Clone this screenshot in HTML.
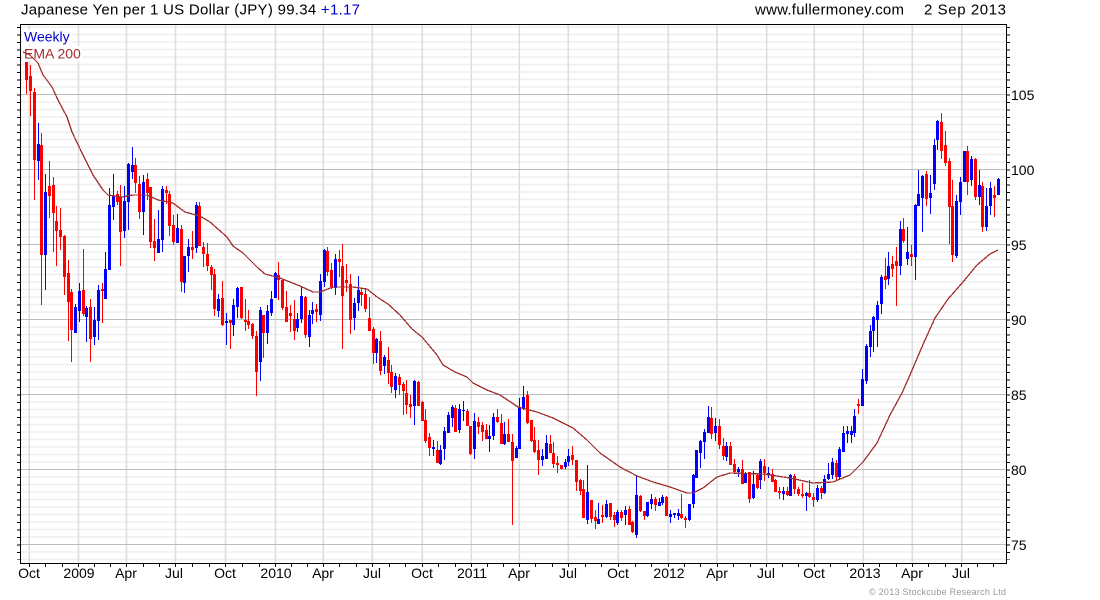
<!DOCTYPE html>
<html><head><meta charset="utf-8"><title>JPY</title>
<style>html,body{margin:0;padding:0;background:#fff}svg{display:block}text{font-family:"Liberation Sans",Arial,sans-serif;font-size:14px}</style></head>
<body>
<svg width="1100" height="600" viewBox="0 0 1100 600" xmlns="http://www.w3.org/2000/svg">
<rect width="1100" height="600" fill="#fff"/>
<path fill="none" stroke="#efefef" stroke-width="1.6" d="M21 27H1006M21 34.5H1006M21 42H1006M21 49.5H1006M21 57H1006M21 64.5H1006M21 72H1006M21 79.5H1006M21 87H1006M21 102H1006M21 109.5H1006M21 117H1006M21 124.5H1006M21 132H1006M21 139.5H1006M21 147H1006M21 154.5H1006M21 162H1006M21 177H1006M21 184.5H1006M21 192H1006M21 199.5H1006M21 207H1006M21 214.5H1006M21 222H1006M21 229.5H1006M21 237H1006M21 252H1006M21 259.5H1006M21 267H1006M21 274.5H1006M21 282H1006M21 289.5H1006M21 297H1006M21 304.5H1006M21 312H1006M21 327H1006M21 334.5H1006M21 342H1006M21 349.5H1006M21 357H1006M21 364.5H1006M21 372H1006M21 379.5H1006M21 387H1006M21 402H1006M21 409.5H1006M21 417H1006M21 424.5H1006M21 432H1006M21 439.5H1006M21 447H1006M21 454.5H1006M21 462H1006M21 477H1006M21 484.5H1006M21 492H1006M21 499.5H1006M21 507H1006M21 514.5H1006M21 522H1006M21 529.5H1006M21 537H1006M21 552H1006M21 559.5H1006"/>
<path fill="none" stroke="#dedede" stroke-width="1.6" d="M29.3 25V563M78.5 25V563M126.5 25V563M175.5 25V563M225.5 25V563M275.5 25V563M323.3 25V563M372.3 25V563M422.3 25V563M471.3 25V563M519.3 25V563M568.3 25V563M618.3 25V563M668.3 25V563M717 25V563M766.7 25V563M814.3 25V563M863.3 25V563M912.3 25V563M961.7 25V563"/>
<path fill="none" stroke="#bcbcbc" stroke-width="1" d="M21 94.5H1006M21 169.5H1006M21 244.5H1006M21 319.5H1006M21 394.5H1006M21 469.5H1006M21 544.5H1006"/>
<rect x="23" y="30" width="49" height="15" fill="#fff"/>
<rect x="23" y="46" width="59" height="15" fill="#fff"/>
<g transform="translate(.5 0)" fill="none">
<path stroke="#0000ff" stroke-width="1" d="M38 123V180M45 174V290M75 304V333M79 283V322M86 306V342M94 307V345M98 285V340M105 252V299M109 188V270M113 174V220M124 186V238M128 163V230M132 147V179M143 175V235M158 210V253M162 186V252M177 214V243M184 256V293M188 239V272M196 202V253M218 294V317M226 313V345M233 299V336M237 287V318M260 307V381M267 305V344M271 291V316M275 272V298M297 313V332M301 287V323M309 310V347M312 302V324M320 274V321M324 249V287M335 254V295M354 298V330M358 276V311M376 338V363M384 355V374M395 373V398M414 380V425M433 440V456M440 445V465M444 427V460M448 412V433M452 405V427M459 404V433M463 401V421M474 413V459M489 425V452M493 413V440M504 422V445M516 446V458M519 398V449M523 386V410M542 449V466M546 435V459M565 459V469M568 449V466M587 465V524M598 503V524M606 500V518M617 510V525M625 506V525M636 475V538M647 502V517M651 494V509M659 498V506M662 495V505M670 510V523M674 513V518M678 509V520M689 504V521M693 474V508M696 450V478M700 440V468M704 429V459M708 406V433M715 418V441M726 442V461M738 467V477M745 472V483M753 471V499M760 459V489M768 467V478M783 487V500M790 474V496M806 492V511M817 485V502M824 475V494M828 463V480M832 458V479M839 447V480M843 426V452M847 426V443M851 426V443M854 409V437M862 369V406M866 344V384M870 325V357M873 316V352M877 301V347M881 275V314M888 252V285M900 221V275M907 227V265M915 204V280M918 170V206M922 175V232M930 175V214M934 139V190M937 120V150M956 195V258M960 177V215M964 151V182M971 156V186M979 170V205M986 188V231M990 182V215M998 178V195"/>
<path stroke="#0000ff" stroke-width="3" d="M38 144V161M45 192V255M75 307V333M79 291V311M86 308V317M94 320V337M98 290V321M105 269V299M109 205V270M113 196V207M124 201V231M128 164V202M132 165V172M143 182V212M158 239V253M162 189V240M177 228V243M184 256V283M188 247V256M196 205V248M218 299V311M226 321V323M233 305V325M237 288V307M260 310V362M267 311V333M271 299V313M275 273V298M297 319V328M301 296V319M309 315V337M312 310V314M320 281V315M324 250V282M335 259V288M354 303V318M358 290V303M376 339V353M384 357V366M395 376V390M414 381V406M433 447V449M440 450V464M444 431V449M448 415V433M452 407V418M459 409V430M463 410V411M474 421V449M489 436V439M493 417V436M504 434V444M516 448V458M519 407V449M523 397V408M542 456V460M546 443V459M565 462V467M568 456V462M587 492V520M598 519V524M606 504V517M617 512V523M625 510V515M636 495V535M647 502V516M651 499V504M659 502V506M662 497V503M670 514V517M674 513V515M678 513V516M689 504V520M693 475V504M696 450V478M700 441V453M704 432V442M708 417V433M715 426V433M726 446V457M738 469V472M745 474V483M753 484V498M760 461V480M768 473V475M783 491V494M790 475V496M806 493V496M817 488V500M824 479V493M828 474V479M832 462V475M839 449V477M843 433V452M847 431V434M851 431V435M854 416V433M862 379V406M866 346V381M870 331V347M873 317V331M877 305V320M881 277V304M888 266V279M900 229V266M907 252V259M915 205V257M918 194V206M922 176V198M930 193V198M934 145V184M937 121V140M956 201V256M960 182V202M964 151V182M971 159V180M979 185V197M986 206V227M990 188V206M998 179V195"/>
<path stroke="#ff0000" stroke-width="1" d="M26 62V94M30 65V116M34 88V200M41 133V305M49 161V218M53 177V252M56 206V266M60 208V250M64 235V295M68 260V341M71 289V362M83 249V316M90 299V362M102 283V323M117 191V205M120 185V266M135 158V193M139 176V219M147 173V200M150 187V248M154 219V261M166 186V204M169 191V236M173 215V245M181 225V292M192 231V259M199 202V246M203 242V267M207 243V271M211 265V290M214 269V316M222 281V326M230 320V349M241 287V319M245 299V331M248 310V329M252 323V339M256 331V396M263 315V358M278 262V300M282 280V310M286 291V322M290 305V332M294 300V340M305 296V338M316 304V322M327 247V276M331 263V289M339 250V277M342 244V349M346 264V292M350 274V334M361 289V306M365 289V312M369 297V331M373 327V364M380 331V375M388 347V384M391 365V393M399 374V395M403 382V415M406 380V414M410 395V418M418 381V406M422 401V421M425 409V443M429 433V456M437 441V463M455 405V432M467 409V426M470 426V455M478 417V434M482 422V441M486 424V439M497 409V423M501 414V444M508 419V442M512 434V525M527 391V424M531 420V442M534 427V453M538 440V475M550 435V453M553 442V468M557 456V473M561 465V469M572 446V465M576 460V491M580 479V495M583 480V518M591 500V523M595 510V529M602 505V523M610 503V520M614 512V527M621 510V521M629 506V525M632 521V533M640 495V512M644 511V520M655 497V511M666 496V516M681 494V519M685 516V528M711 407V439M719 419V449M723 438V460M730 442V465M734 459V474M742 460V484M749 472V503M757 473V489M764 459V481M772 469V482M775 479V492M779 487V499M787 487V496M794 474V494M798 487V496M802 483V498M809 480V498M813 493V507M821 486V499M836 460V481M858 399V414M885 258V289M892 256V277M896 247V306M903 218V243M911 245V266M926 171V206M941 113V159M945 131V166M949 158V244M952 180V262M967 146V195M975 158V200M982 182V232M994 186V217"/>
<path stroke="#ff0000" stroke-width="3" d="M26 62V80M30 76V91M34 92V160M41 145V255M49 186V196M53 185V213M56 221V231M60 230V237M64 236V277M68 273V302M71 292V330M83 290V314M90 307V339M102 289V291M117 194V202M120 197V232M135 165V183M139 184V212M147 179V193M150 187V242M154 241V248M166 190V193M169 194V226M173 225V242M181 229V282M192 247V250M199 206V246M203 247V254M207 254V266M211 267V275M214 274V309M222 298V325M230 320V323M241 287V318M245 320V322M248 321V325M252 324V336M256 336V372M263 315V333M278 275V280M282 280V308M286 307V322M290 313V316M294 319V331M305 297V335M316 309V312M327 251V272M331 270V287M339 259V262M342 266V296M346 280V283M350 284V320M361 292V295M365 294V309M369 318V331M373 329V353M380 341V371M388 360V373M391 372V387M399 377V385M403 384V391M406 393V405M410 404V407M418 382V406M422 402V421M425 420V441M429 437V448M437 450V463M455 408V432M467 411V426M470 426V454M478 422V427M482 425V432M486 430V439M497 417V422M501 423V444M508 434V442M512 442V461M527 395V423M531 420V441M534 440V452M538 450V460M550 444V453M553 453V464M557 463V465M561 465V469M572 455V460M576 460V482M580 480V491M583 489V518M591 500V519M595 517V521M602 515V517M610 503V517M614 515V520M621 512V518M629 509V525M632 522V532M640 496V511M644 511V516M655 499V505M666 497V516M681 514V518M685 518V520M711 418V434M719 426V445M723 446V456M730 446V465M734 464V472M742 469V484M749 472V499M757 475V488M764 466V473M772 474V482M775 480V492M779 491V493M787 491V495M794 476V489M798 489V494M802 494V496M809 493V497M813 497V500M821 488V493M836 463V477M858 404V406M885 276V280M892 264V269M896 261V266M903 229V241M911 254V257M926 174V199M941 122V151M945 145V163M949 161V207M952 206V255M967 151V182M975 159V197M982 186V227M994 195V198"/>
</g>
<text x="24" y="41.500" fill="#0000cc">Weekly</text>
<text x="24" y="58.500" fill="#a52a2a">EMA 200</text>
<polyline fill="none" stroke="#a03030" stroke-width="1.3" shape-rendering="crispEdges" points="23,52 30,55 38,63 43,75 52,87 58,100 67,117 72,132 83,155 93,175 103,190 108,195 122,197 133,195 147,195 158,200 173,203 185,212 200,216 210,222 227,237 233,246 243,253 258,268 265,274 280,278 300,286 313,292 320,292 333,287 353,287 367,289 377,297 388,304 400,315 412,329 422,337 437,355 443,365 455,372 467,377 473,383 487,390 500,395 518,407 537,412 553,418 573,428 587,440 600,453 620,467 637,476 653,482 670,487 687,493 693,493 703,488 717,477 730,473 763,474 790,478 813,483 833,482 850,475 863,462 877,443 890,415 902,393 910,375 925,340 935,318 948,299 963,282 977,265 990,254 998,250"/>
<rect x="20.500" y="24.500" width="986" height="539" fill="none" stroke="#000" stroke-width="1"/>
<path fill="none" stroke="#000" stroke-width="3" stroke-dasharray="1 6.5" d="M18.500 27V560M1008.500 27V560"/>
<path fill="none" stroke="#000" stroke-width="1" d="M29.500 564v3M45.500 564v3M62.500 564v3M78.500 564v3M94.500 564v3M110.500 564v3M126.500 564v3M143.500 564v3M159.500 564v3M175.500 564v3M192.500 564v3M209.500 564v3M225.500 564v3M242.500 564v3M259.500 564v3M275.500 564v3M291.500 564v3M307.500 564v3M323.500 564v3M339.500 564v3M356.500 564v3M372.500 564v3M389.500 564v3M405.500 564v3M422.500 564v3M438.500 564v3M455.500 564v3M471.500 564v3M487.500 564v3M503.500 564v3M519.500 564v3M535.500 564v3M552.500 564v3M568.500 564v3M585.500 564v3M601.500 564v3M618.500 564v3M635.500 564v3M651.500 564v3M668.500 564v3M684.500 564v3M700.500 564v3M717.500 564v3M733.500 564v3M750.500 564v3M766.500 564v3M782.500 564v3M798.500 564v3M814.500 564v3M830.500 564v3M847.500 564v3M863.500 564v3M879.500 564v3M896.500 564v3M912.500 564v3M928.500 564v3M945.500 564v3M961.500 564v3M977.500 564v3M993.500 564v3"/>
<text x="21" y="14.500" fill="#000" style="font-size:15px" textLength="339" lengthAdjust="spacing">Japanese Yen per 1 US Dollar (JPY) 99.34 <tspan fill="#0000cc">+1.17</tspan></text>
<text x="755" y="14.500" fill="#000" style="font-size:15px" textLength="149" lengthAdjust="spacing">www.fullermoney.com</text>
<text x="924" y="14.500" fill="#000" style="font-size:15px" textLength="82" lengthAdjust="spacing">2 Sep 2013</text>
<g fill="#000">
<text x="1011" y="100">105</text><text x="1011" y="175">100</text><text x="1011" y="250">95</text><text x="1011" y="325">90</text><text x="1011" y="400">85</text><text x="1011" y="475">80</text><text x="1011" y="550">75</text>
</g>
<g fill="#000" text-anchor="middle">
<text x="29" y="578">Oct</text><text x="79" y="578">2009</text><text x="126" y="578">Apr</text><text x="174" y="578">Jul</text><text x="225" y="578">Oct</text><text x="276" y="578">2010</text><text x="323" y="578">Apr</text><text x="372" y="578">Jul</text><text x="422" y="578">Oct</text><text x="472" y="578">2011</text><text x="519" y="578">Apr</text><text x="568" y="578">Jul</text><text x="618" y="578">Oct</text><text x="669" y="578">2012</text><text x="717" y="578">Apr</text><text x="766" y="578">Jul</text><text x="814" y="578">Oct</text><text x="865" y="578">2013</text><text x="912" y="578">Apr</text><text x="961" y="578">Jul</text>
</g>
<text x="869" y="595" fill="#999" style="font-size:9px" textLength="137" lengthAdjust="spacing">© 2013 Stockcube Research Ltd</text>
</svg>
</body></html>
